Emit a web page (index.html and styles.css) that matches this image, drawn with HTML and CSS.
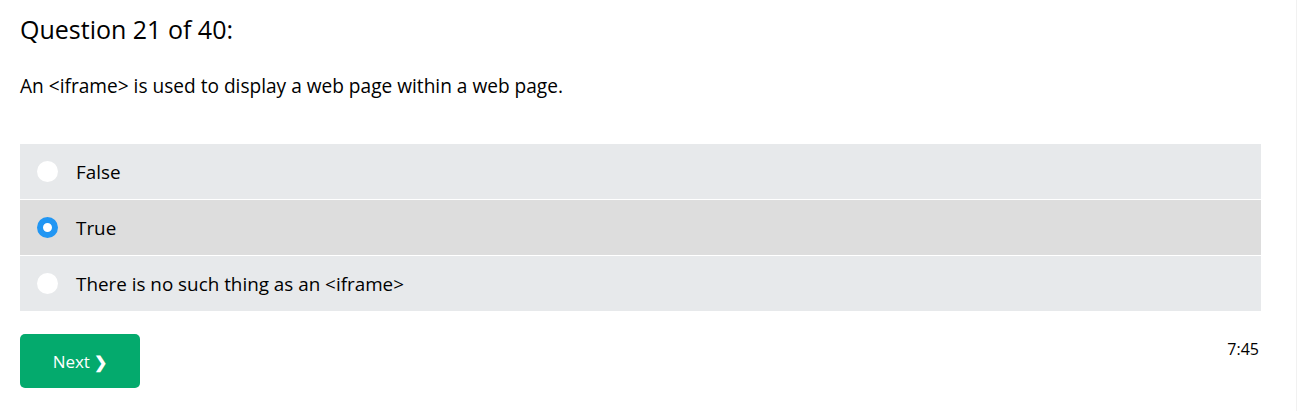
FILE: index.html
```html
<!DOCTYPE html>
<html>
<head>
<meta charset="utf-8">
<link rel="stylesheet" href="styles.css">
</head>
<body>
<div class="page">
  <h1 class="title">Question 21 of 40:</h1>
  <p class="question">An &lt;iframe&gt; is used to display a web page within a web page.</p>
  <div class="options">
    <label class="option"><span class="radio"></span><span class="label">False</span></label>
    <label class="option selected"><span class="radio"></span><span class="label">True</span></label>
    <label class="option"><span class="radio"></span><span class="label">There is no such thing as an &lt;iframe&gt;</span></label>
  </div>
  <div class="footer">
    <button class="next">Next <span class="chev">&#10095;</span></button>
    <span class="timer">7:45</span>
  </div>
</div>
</body>
</html>
```
FILE: styles.css
```css
html, body {
  margin: 0;
  padding: 0;
  background: #fff;
}
body {
  font-family: "Open Sans", "Noto Sans", sans-serif;
  color: #000;
}
.page {
  height: 411px;
  box-sizing: border-box;
  padding: 0 35px 0 20px;
  width: 1297px;
  border-right: 1px solid #f1f1f1;
}
.title {
  margin: 0;
  padding-top: 13px;
  font-weight: 400;
  font-size: 25px;
  line-height: 32px;
}
.question {
  margin: 29px 0 0;
  font-size: 19.1px;
  line-height: 24px;
}
.options {
  margin-top: 46px;
  display: flex;
  flex-direction: column;
  gap: 1px;
}
.option {
  display: flex;
  align-items: center;
  height: 55px;
  background: #e7e9eb;
  font-size: 18.85px;
}
.option.selected {
  background: #dddddd;
}
.radio {
  width: 21px;
  height: 21px;
  border-radius: 50%;
  background: #fff;
  margin-left: 17px;
  margin-right: 18px;
  box-sizing: border-box;
}
.selected .radio {
  background: #fff;
  border: 6px solid #2196f3;
}
.footer {
  display: flex;
  justify-content: space-between;
  align-items: flex-start;
  margin-top: 23px;
}
.next {
  width: 120px;
  height: 54px;
  background: #04aa6d;
  color: #fff;
  border: none;
  border-radius: 5px;
  font-family: inherit;
  font-size: 17px;
  padding: 0;
}
.chev {
  font-size: 16px;
  font-weight: 700;
}
.timer {
  font-size: 16px;
  margin-top: 4px;
  margin-right: 2px;
}
```
